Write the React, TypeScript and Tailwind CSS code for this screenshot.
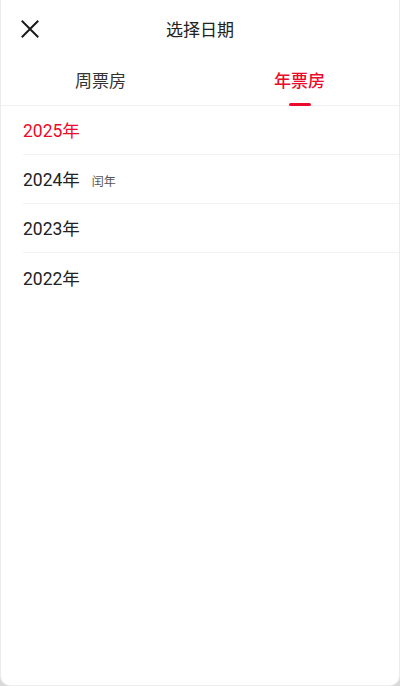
import React, { useState } from 'react';

const years = [
  { year: '2025年', note: '' },
  { year: '2024年', note: '闰年' },
  { year: '2023年', note: '' },
  { year: '2022年', note: '' }
];

const CloseIcon: React.FC = () => (
  <svg width="18" height="18" viewBox="0 0 18 18" fill="none">
    <path d="M1.5 1.5L16.5 16.5M16.5 1.5L1.5 16.5" stroke="#1a1a1a" strokeWidth="2" strokeLinecap="square" />
  </svg>
);

const App: React.FC = () => {
  const [tab, setTab] = useState(1);
  const [selected, setSelected] = useState(0);

  return (
    <div className="h-[686px] w-[400px] bg-[#d9d9d9] font-['Roboto','Noto_Sans_CJK_SC',sans-serif]">
      <div className="flex h-full flex-col rounded-b-[10px] border-x border-b border-[#ececec] bg-white">
        <div className="relative flex h-[60px] items-center justify-center pt-[2px]">
          <button className="absolute left-[20px] top-[20px]">
            <CloseIcon />
          </button>
          <h1 className="text-[17px] text-[#222]">选择日期</h1>
        </div>
        <div className="flex h-[46px] border-b border-[#f0f0f0]">
          {['周票房', '年票房'].map((label, i) => (
            <button
              key={label}
              onClick={() => setTab(i)}
              className="relative flex flex-1 items-center justify-center pb-[1px]"
            >
              <span className={`text-[17px] ${tab === i ? 'font-medium text-[#eb0a2a]' : 'text-[#333]'}`}>{label}</span>
              {tab === i ? (
                <span className="absolute bottom-[-1px] left-1/2 h-[3px] w-[22px] -translate-x-1/2 rounded-full bg-[#eb0a2a]" />
              ) : null}
            </button>
          ))}
        </div>
        <ul className="pl-[22px]">
          {years.map((item, i) => (
            <li
              key={item.year}
              onClick={() => setSelected(i)}
              className={`flex h-[49px] items-center pt-[3px] ${i < years.length - 1 ? 'border-b border-[#f2f2f2]' : ''}`}
            >
              <span className={`text-[17.5px] ${selected === i ? 'text-[#eb0a2a]' : 'text-[#222]'}`}>{item.year}</span>
              {item.note ? <span className="ml-[12px] mt-[2px] text-[12px] text-[#555]">{item.note}</span> : null}
            </li>
          ))}
        </ul>
      </div>
    </div>
  );
};

export default App;
